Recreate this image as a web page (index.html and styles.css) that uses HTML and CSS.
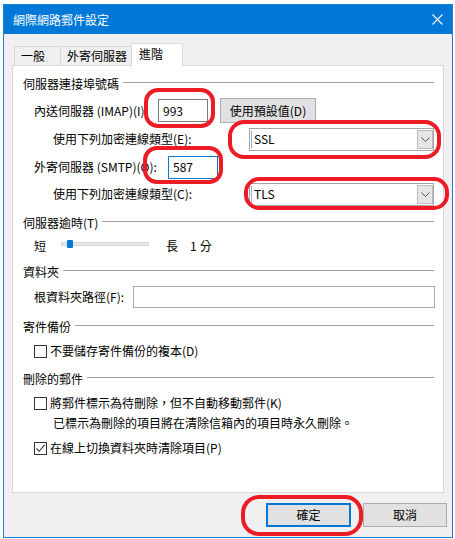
FILE: index.html
```html
<!DOCTYPE html>
<html lang="zh-Hant">
<head>
<meta charset="utf-8">
<title>網際網路郵件設定</title>
<link rel="stylesheet" href="styles.css">
</head>
<body>
<div class="dialog">
  <div class="titlebar">
    <span class="title">網際網路郵件設定</span>
    <svg class="close" viewBox="0 0 11 11"><path d="M0.5 0.5 L10.5 10.5 M10.5 0.5 L0.5 10.5" stroke="#fff" stroke-width="1.1" fill="none"/></svg>
  </div>
  <div class="body">
    <div class="tabs">
      <div class="tab t1">一般</div>
      <div class="tab t2">外寄伺服器</div>
      <div class="tab t3">進階</div>
    </div>
    <div class="panel">
      <div class="group g1"><span>伺服器連接埠號碼</span><i class="rule"></i></div>
      <div class="row r-imap">
        <span class="lbl w-imap">內送伺服器 (IMAP)(I):</span>
        <div class="input port">993</div>
        <div class="btn default-btn">使用預設值(D)</div>
      </div>
      <div class="row sub r-e">
        <span class="lbl">使用下列加密連線類型(E):</span>
        <div class="select">
          <span class="caret"></span><span class="val">SSL</span>
          <span class="arrow"><svg viewBox="0 0 9 5"><path d="M0.5 0.5 L4.5 4.5 L8.5 0.5" stroke="#555" stroke-width="1" fill="none"/></svg></span>
        </div>
      </div>
      <div class="row r-smtp">
        <span class="lbl w-smtp">外寄伺服器 (SMTP)(O):</span>
        <div class="input port focus">587</div>
      </div>
      <div class="row sub r-c">
        <span class="lbl">使用下列加密連線類型(C):</span>
        <div class="select">
          <span class="caret"></span><span class="val">TLS</span>
          <span class="arrow"><svg viewBox="0 0 9 5"><path d="M0.5 0.5 L4.5 4.5 L8.5 0.5" stroke="#555" stroke-width="1" fill="none"/></svg></span>
        </div>
      </div>

      <div class="group g2"><span>伺服器逾時(T)</span><i class="rule"></i></div>
      <div class="row r-slider">
        <span>短</span>
        <div class="track"><i class="thumb"></i></div>
        <span class="long">長</span>
        <span class="num">1</span>
        <span class="unit">分</span>
      </div>

      <div class="group g3"><span>資料夾</span><i class="rule"></i></div>
      <div class="row r-root">
        <span class="lbl w-root">根資料夾路徑(F):</span>
        <div class="input path"></div>
      </div>

      <div class="group g4"><span>寄件備份</span><i class="rule"></i></div>
      <div class="row r-cbd">
        <span class="cb"></span><span>不要儲存寄件備份的複本(D)</span>
      </div>

      <div class="group g5"><span>刪除的郵件</span><i class="rule"></i></div>
      <div class="row r-cbk">
        <span class="cb"></span><span>將郵件標示為待刪除，但不自動移動郵件(K)</span>
      </div>
      <div class="row sub r-note">
        <span>已標示為刪除的項目將在清除信箱內的項目時永久刪除。</span>
      </div>
      <div class="row r-cbp">
        <span class="cb"><svg viewBox="0 0 11 11"><path d="M1.5 5.5 L4.2 8.3 L9.6 1.8" stroke="#333" stroke-width="1.1" fill="none"/></svg></span><span>在線上切換資料夾時清除項目(P)</span>
      </div>
    </div>
    <div class="actions">
      <div class="btn ok">確定</div>
      <div class="btn cancel">取消</div>
    </div>
  </div>
</div>

<svg class="annotations" viewBox="0 0 455 539">
  <rect x="146" y="90" width="67" height="36" rx="12" ry="12"/>
  <rect x="230" y="122" width="209" height="35" rx="14" ry="14"/>
  <rect x="145" y="148" width="76" height="34" rx="12" ry="12"/>
  <rect x="246" y="179" width="201" height="29" rx="13" ry="13"/>
  <rect x="243" y="497" width="118" height="37" rx="16" ry="16"/>
</svg>
</body>
</html>
```

FILE: styles.css
```css
html, body {
  margin: 0;
  padding: 0;
}
body {
  position: relative;
  width: 455px;
  height: 539px;
  overflow: hidden;
  background: #fff;
  font-family: "Noto Sans CJK TC", "Noto Sans", sans-serif;
  font-size: 12px;
  line-height: 16px;
  color: #000;
}

.dialog {
  box-sizing: border-box;
  width: 450px;
  height: 534px;
  margin: 4px 0 0 3px;
  border: 1px solid #1a7fd4;
  background: #f0f0f0;
  display: flex;
  flex-direction: column;
}

.titlebar {
  flex: none;
  height: 29px;
  background: #0078d7;
  color: #fff;
  display: flex;
  align-items: center;
  justify-content: space-between;
  padding: 0 9px;
}
.title {
  font-size: 12px;
  line-height: 16px;
}
.close {
  width: 11px;
  height: 11px;
  margin-top: -1px;
}

.body {
  flex: 1;
  display: flex;
  flex-direction: column;
  padding: 9px 8px 0;
}

.tabs {
  display: flex;
  align-items: flex-end;
  height: 22px;
  margin-left: 2px;
}
.tab {
  box-sizing: border-box;
  height: 19px;
  border: 1px solid #d9d9d9;
  border-bottom: none;
  background: #f0f0f0;
  display: flex;
  align-items: center;
  white-space: nowrap;
}
.t1 { width: 47px; padding-left: 6px; }
.t2 { width: 72px; margin-left: -1px; padding-left: 6px; }
.t3 {
  width: 52px;
  margin-left: -1px;
  padding-left: 7px;
  padding-bottom: 2px;
  height: 23px;
  margin-bottom: -1px;
  background: #fff;
  position: relative;
  z-index: 1;
}

.panel {
  box-sizing: border-box;
  height: 428px;
  background: #fff;
  border: 1px solid #d9d9d9;
  padding-top: 10px;
}

.group {
  display: flex;
  align-items: center;
  height: 16px;
  padding: 0 9px 0 10px;
  white-space: nowrap;
}
.rule {
  flex: 1;
  height: 1px;
  background: #a0a0a0;
  margin: -3px 0 0 4px;
}
.g2 { margin-top: 9px; }
.g3 { margin-top: 10px; }
.g4 { margin-top: 11px; }
.g5 { margin-top: 12px; }

.row {
  display: flex;
  align-items: center;
  padding-left: 21px;
  white-space: nowrap;
}
.row.sub { padding-left: 40px; }

.r-imap { height: 25px; margin-top: 6px; }
.r-e { height: 24px; margin-top: 4px; }
.r-smtp { height: 24px; margin-top: 4px; }
.r-c { height: 24px; margin-top: 3px; }
.r-slider { height: 16px; margin-top: 7px; }
.r-root { height: 22px; margin-top: 6px; }
.r-cbd { height: 16px; margin-top: 8px; }
.r-cbk { height: 16px; margin-top: 8px; }
.r-note { height: 16px; margin-top: 4px; padding-left: 40px; }
.r-cbp { height: 16px; margin-top: 9px; }

.lbl { flex: none; }
.w-imap { width: 124px; }
.w-smtp { width: 134px; }
.w-root { width: 99px; }

.input {
  box-sizing: border-box;
  height: 23px;
  border: 1px solid #7a7a7a;
  background: #fff;
  display: flex;
  align-items: center;
  padding-left: 4px;
}
.port { width: 50px; }
.input.focus { border-color: #0078d7; }
.path {
  flex: 1;
  height: 22px;
  margin-right: 8px;
  border-color: #ababab;
}

.btn {
  box-sizing: border-box;
  background: #e1e1e1;
  border: 1px solid #adadad;
  display: flex;
  align-items: center;
  justify-content: center;
  white-space: nowrap;
}
.default-btn {
  width: 96px;
  height: 25px;
  margin-left: 12px;
}

.select {
  box-sizing: border-box;
  width: 185px;
  height: 23px;
  margin-left: auto;
  margin-right: 9px;
  border: 1px solid #a6a6a6;
  background: #fff;
  padding: 1px 0 1px 1px;
  display: flex;
  align-items: center;
}
.caret {
  width: 1px;
  height: 17px;
  background: #86b6e6;
  margin-right: 2px;
}
.val { flex: 1; }
.arrow {
  box-sizing: border-box;
  width: 16px;
  height: 19px;
  background: #e5e5e5;
  border: 1px solid #bcbcbc;
  display: flex;
  align-items: center;
  justify-content: center;
}
.arrow svg {
  width: 9px;
  height: 5px;
}

.track {
  position: relative;
  box-sizing: border-box;
  width: 88px;
  height: 4px;
  margin: 0 0 4px 15px;
  background: #e7e7e7;
  border: 1px solid #d6d6d6;
}
.thumb {
  position: absolute;
  left: 5px;
  top: -3px;
  width: 6px;
  height: 8px;
  background: #0078d7;
  border-radius: 1px;
}
.long { margin-left: 17px; }
.num { margin-left: 12px; }
.unit { margin-left: 3px; }

.cb {
  box-sizing: border-box;
  flex: none;
  width: 13px;
  height: 13px;
  border: 1px solid #333;
  background: #fff;
  margin-right: 3px;
  display: flex;
}
.cb svg {
  width: 11px;
  height: 11px;
}

.actions {
  display: flex;
  justify-content: flex-end;
  gap: 12px;
  margin: 10px -3px 0 0;
}
.actions .btn { height: 24px; }
.ok {
  width: 85px;
  border: 2px solid #0078d7;
}
.cancel { width: 84px; }

.annotations {
  position: absolute;
  left: 0;
  top: 0;
  width: 455px;
  height: 539px;
  pointer-events: none;
}
.annotations rect {
  fill: none;
  stroke: #ed1c24;
  stroke-width: 4;
}
```
